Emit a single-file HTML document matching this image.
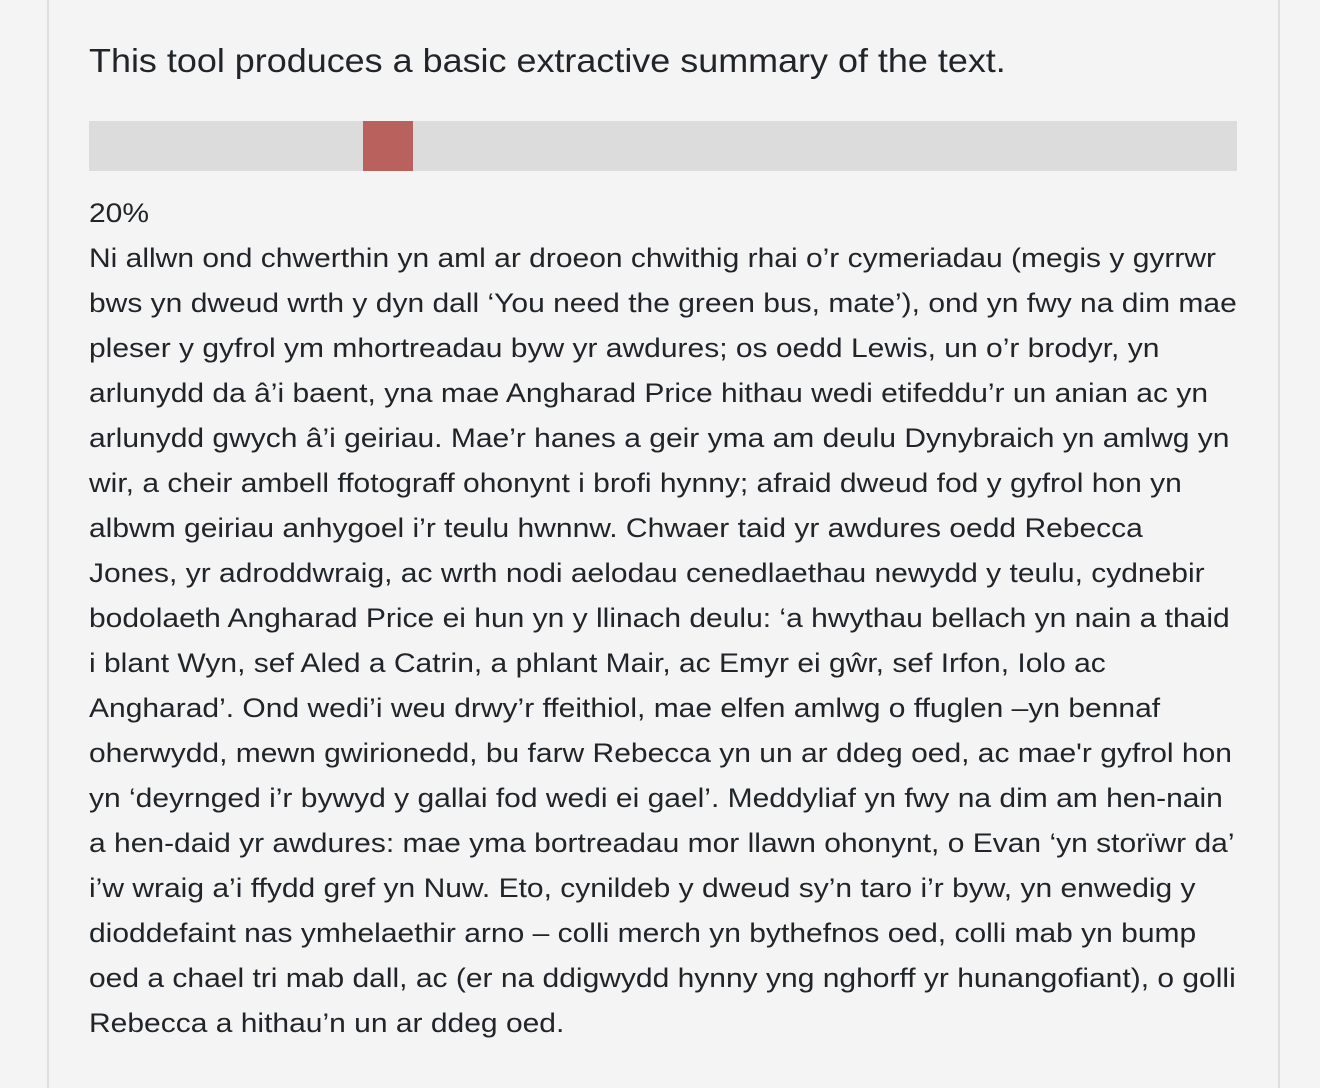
<!DOCTYPE html>
<html><head><meta charset="utf-8"><style>
html,body{margin:0;padding:0;background:#f4f4f4;}
body{width:1320px;height:1072px;overflow:hidden;position:relative;font-family:"Liberation Sans",Arial,sans-serif;color:#212529;}
.card{position:absolute;left:47px;top:-2px;width:1229px;height:1090px;border-left:2px solid #dedede;border-right:2px solid #dedede;background:#f4f4f4;}
h1{position:absolute;left:40px;top:43px;margin:0;font-weight:normal;font-size:33px;line-height:40px;white-space:nowrap;transform:scaleX(1.089);transform-origin:0 0;}
.bar{position:absolute;left:40px;top:123px;width:1148px;height:50px;background:#dcdcdc;}
.thumb{position:absolute;left:274px;top:0;width:50px;height:50px;background:#b9615c;}
.txt{position:absolute;left:40px;top:193px;font-size:26.5px;line-height:45px;white-space:nowrap;transform:scaleX(1.132);transform-origin:0 0;}
</style></head><body>
<div class="card">
<h1>This tool produces a basic extractive summary of the text.</h1>
<div class="bar"><div class="thumb"></div></div>
<div class="txt">20%<br>
Ni allwn ond chwerthin yn aml ar droeon chwithig rhai o’r cymeriadau (megis y gyrrwr<br>
bws yn dweud wrth y dyn dall ‘You need the green bus, mate’), ond yn fwy na dim mae<br>
pleser y gyfrol ym mhortreadau byw yr awdures; os oedd Lewis, un o’r brodyr, yn<br>
arlunydd da â’i baent, yna mae Angharad Price hithau wedi etifeddu’r un anian ac yn<br>
arlunydd gwych â’i geiriau. Mae’r hanes a geir yma am deulu Dynybraich yn amlwg yn<br>
wir, a cheir ambell ffotograff ohonynt i brofi hynny; afraid dweud fod y gyfrol hon yn<br>
albwm geiriau anhygoel i’r teulu hwnnw. Chwaer taid yr awdures oedd Rebecca<br>
Jones, yr adroddwraig, ac wrth nodi aelodau cenedlaethau newydd y teulu, cydnebir<br>
bodolaeth Angharad Price ei hun yn y llinach deulu: ‘a hwythau bellach yn nain a thaid<br>
i blant Wyn, sef Aled a Catrin, a phlant Mair, ac Emyr ei gŵr, sef Irfon, Iolo ac<br>
Angharad’. Ond wedi’i weu drwy’r ffeithiol, mae elfen amlwg o ffuglen –yn bennaf<br>
oherwydd, mewn gwirionedd, bu farw Rebecca yn un ar ddeg oed, ac mae'r gyfrol hon<br>
yn ‘deyrnged i’r bywyd y gallai fod wedi ei gael’. Meddyliaf yn fwy na dim am hen-nain<br>
a hen-daid yr awdures: mae yma bortreadau mor llawn ohonynt, o Evan ‘yn storïwr da’<br>
i’w wraig a’i ffydd gref yn Nuw. Eto, cynildeb y dweud sy’n taro i’r byw, yn enwedig y<br>
dioddefaint nas ymhelaethir arno – colli merch yn bythefnos oed, colli mab yn bump<br>
oed a chael tri mab dall, ac (er na ddigwydd hynny yng nghorff yr hunangofiant), o golli<br>
Rebecca a hithau’n un ar ddeg oed.</div>
</div>
</body></html>
